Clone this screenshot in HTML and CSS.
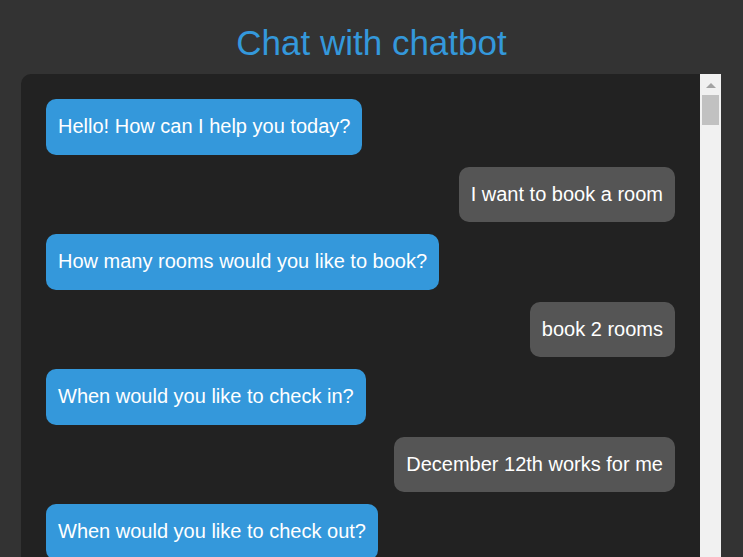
FILE: index.html
```html
<!DOCTYPE html>
<html>
<head>
<meta charset="utf-8">
<link rel="stylesheet" href="styles.css">
</head>
<body>
<h1 class="title">Chat with chatbot</h1>
<div class="chat">
  <div class="messages">
    <div class="msg bot">Hello! How can I help you today?</div>
    <div class="msg user">I want to book a room</div>
    <div class="msg bot">How many rooms would you like to book?</div>
    <div class="msg user">book 2 rooms</div>
    <div class="msg bot">When would you like to check in?</div>
    <div class="msg user">December 12th works for me</div>
    <div class="msg bot">When would you like to check out?</div>
  </div>
  <div class="scrollbar">
    <div class="arrow"></div>
    <div class="thumb"></div>
  </div>
</div>
</body>
</html>
```
FILE: styles.css
```css
html, body {
  margin: 0;
  padding: 0;
  height: 100%;
  overflow: hidden;
}
body {
  background: #333333;
  font-family: "Liberation Sans", Arial, sans-serif;
}
.title {
  margin: 23px 0 11px;
  font-size: 35px;
  line-height: 40px;
  font-weight: normal;
  color: #3498db;
  text-align: center;
}
.chat {
  width: 700px;
  height: 600px;
  margin: 0 22px 0 21px;
  background: #222222;
  border-radius: 10px 0 0 10px;
  display: flex;
}
.messages {
  flex: 1;
  padding: 25px;
  display: flex;
  flex-direction: column;
  gap: 12px;
}
.msg {
  font-size: 20px;
  line-height: 23.5px;
  padding: 16px 12px;
  border-radius: 10px;
  color: #ffffff;
}
.bot {
  align-self: flex-start;
  background: #3498db;
}
.user {
  align-self: flex-end;
  background: #555555;
}
.scrollbar {
  width: 21px;
  background: #f1f1f1;
  position: relative;
}
.arrow {
  position: absolute;
  left: 6px;
  top: 9px;
  width: 0;
  height: 0;
  border-left: 5px solid transparent;
  border-right: 5px solid transparent;
  border-bottom: 5px solid #a3a3a3;
}
.thumb {
  position: absolute;
  left: 2px;
  top: 21px;
  width: 17px;
  height: 30px;
  background: #c1c1c1;
}
```
